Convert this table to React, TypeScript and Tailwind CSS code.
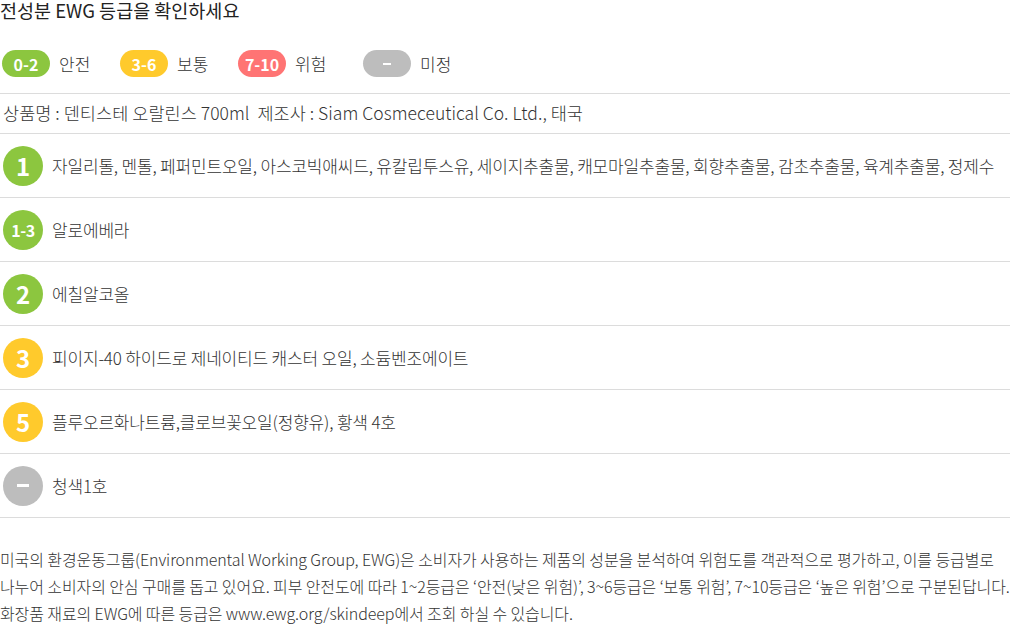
const FONT = { fontFamily: '"Noto Sans CJK KR", "Noto Sans", sans-serif' };

type Grade = { label: string; color: string; small?: boolean; dash?: boolean };

const legend: { grade: Grade; text: string; w: string }[] = [
  { grade: { label: '0-2', color: 'bg-[#8cc63f]' }, text: '안전', w: 'w-[118px]' },
  { grade: { label: '3-6', color: 'bg-[#ffca2c]' }, text: '보통', w: 'w-[118px]' },
  { grade: { label: '7-10', color: 'bg-[#ff7474]' }, text: '위험', w: 'w-[125px]' },
  { grade: { label: '', color: 'bg-[#bdbdbd]', dash: true }, text: '미정', w: 'w-[118px]' },
];

const rows: { grade: Grade; text: string }[] = [
  {
    grade: { label: '1', color: 'bg-[#8cc63f]' },
    text: '자일리톨, 멘톨, 페퍼민트오일, 아스코빅애씨드, 유칼립투스유, 세이지추출물, 캐모마일추출물, 회향추출물, 감초추출물, 육계추출물, 정제수',
  },
  { grade: { label: '1-3', color: 'bg-[#8cc63f]', small: true }, text: '알로에베라' },
  { grade: { label: '2', color: 'bg-[#8cc63f]' }, text: '에칠알코올' },
  { grade: { label: '3', color: 'bg-[#ffca2c]' }, text: '피이지-40 하이드로 제네이티드 캐스터 오일, 소듐벤조에이트' },
  { grade: { label: '5', color: 'bg-[#ffca2c]' }, text: '플루오르화나트륨,클로브꽃오일(정향유), 황색 4호' },
  { grade: { label: '', color: 'bg-[#bdbdbd]', dash: true }, text: '청색1호' },
];

function Pill({ grade }: { grade: Grade }) {
  return (
    <span className={`flex h-[27px] w-[48px] items-center justify-center rounded-full text-[16px] font-bold text-white ${grade.color}`}>
      {grade.dash ? <span className="block h-[2px] w-[8px] bg-white" /> : grade.label}
    </span>
  );
}

function Circle({ grade }: { grade: Grade }) {
  return (
    <span
      className={`flex h-[40px] w-[40px] shrink-0 items-center justify-center rounded-full font-bold text-white ${grade.color} ${
        grade.small ? 'text-[16px] tracking-[-0.5px]' : 'text-[24px]'
      }`}
    >
      {grade.dash ? <span className="block h-[3px] w-[12px] bg-white" /> : grade.label}
    </span>
  );
}

export default function App() {
  return (
    <div className="h-[627px] w-[1010px] overflow-hidden bg-white font-light text-[#333]" style={FONT}>
      <h2 className="-mt-[2px] -mb-[2px] text-[18.5px] leading-[24px] font-normal text-[#222]">전성분 EWG 등급을 확인하세요</h2>

      {/* 등급 범례 */}
      <div className="mt-[30px] mb-[16px] flex h-[27px] items-center pl-[2px]">
        {legend.map((l) => (
          <div key={l.text} className={`flex items-center gap-[9px] ${l.w}`}>
            <Pill grade={l.grade} />
            <span className="text-[17px]">{l.text}</span>
          </div>
        ))}
      </div>

      <div className="flex h-[41px] items-center border-y border-[#dcdcdc] pl-[3px] text-[17.5px] tracking-[0.05px]">
        상품명 : 덴티스테 오랄린스 700ml&nbsp;&nbsp;제조사 : Siam Cosmeceutical Co. Ltd., 태국
      </div>

      {rows.map((r, i) => (
        <div key={i} className="flex h-[64px] items-center gap-[9px] border-b border-[#dcdcdc] pl-[3px]">
          <Circle grade={r.grade} />
          <span className="text-[17px] tracking-[-0.18px]">{r.text}</span>
        </div>
      ))}

      <p className="mt-[28px] whitespace-nowrap text-[16px] leading-[27px] tracking-[-0.1px]">
        미국의 환경운동그룹(Environmental Working Group, EWG)은 소비자가 사용하는 제품의 성분을 분석하여 위험도를 객관적으로 평가하고, 이를 등급별로
        <br />
        나누어 소비자의 안심 구매를 돕고 있어요. 피부 안전도에 따라 1~2등급은 ‘안전(낮은 위험)’, 3~6등급은 ‘보통 위험’, 7~10등급은 ‘높은 위험’으로 구분된답니다.
        <br />
        화장품 재료의 EWG에 따른 등급은 www.ewg.org/skindeep에서 조회 하실 수 있습니다.
      </p>
    </div>
  );
}
